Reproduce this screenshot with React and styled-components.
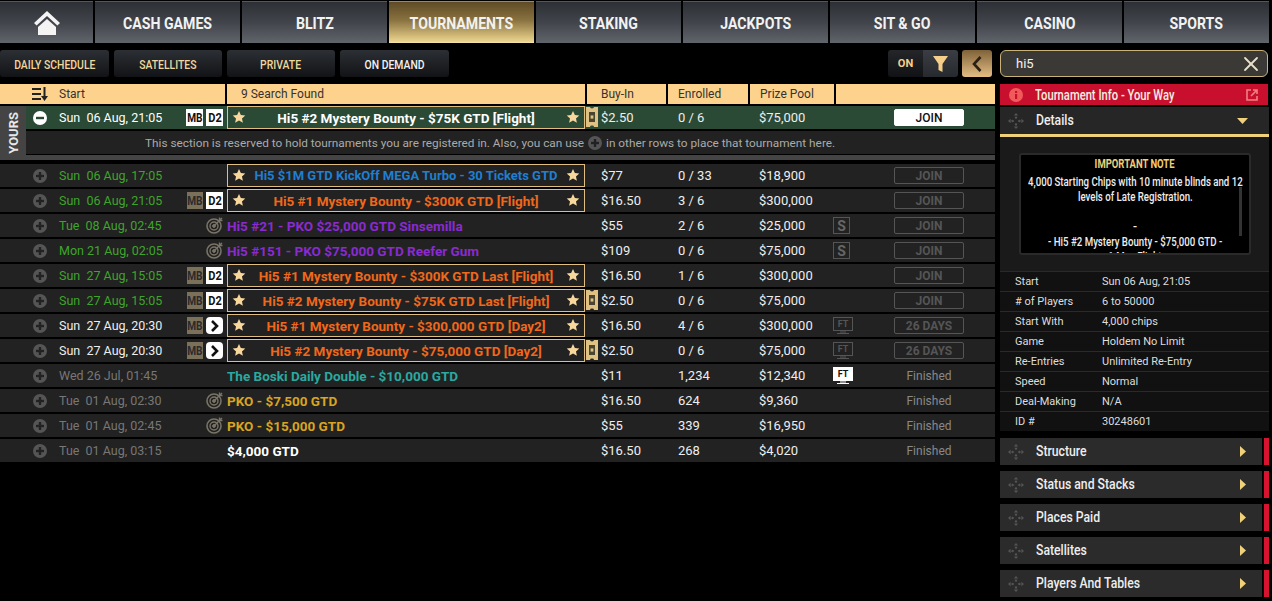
import React from "react";
import styled, { createGlobalStyle } from "styled-components";
import { X } from "lucide-react";

const GlobalStyle = createGlobalStyle`
  html, body { margin: 0; padding: 0; background: #000; }
  body { font-family: Roboto, "Liberation Sans", sans-serif; color: #fff; overflow: hidden; }
`;

const Page = styled.div`
  width: 1272px;
  height: 601px;
  overflow: hidden;
  background: #000;
`;

const Nav = styled.nav`
  display: flex;
  gap: 2px;
  height: 43px;
  padding-top: 1px;
  box-sizing: border-box;
`;

const Tab = styled.div`
  flex: 0 0 ${(p) => (p.$home ? 93 : 145)}px;
  display: flex;
  align-items: center;
  justify-content: center;
  font-size: 17px;
  font-weight: 700;
  color: #f2f2f2;
  background: ${(p) =>
    p.$active
      ? "linear-gradient(#5e4a26 0%, #8a7340 45%, #e9d18c 95%, #f6e6ae 100%)"
      : "linear-gradient(#2c2f34 0%, #41454b 50%, #60646b 100%)"};
  border-top: 1px solid ${(p) => (p.$active ? "#a08a50" : "#54585e")};
  box-sizing: border-box;
`;

const Squeeze = styled.span`
  display: inline-block;
  white-space: nowrap;
  transform: scaleX(${(p) => p.$x || 0.83});
  transform-origin: ${(p) => p.$origin || "center"};
`;

const Main = styled.div`
  display: grid;
  grid-template-columns: 995px 269px;
  column-gap: 5px;
  padding-top: 7px;
`;

const LeftColumn = styled.div`
  display: flex;
  flex-direction: column;
`;

const RightColumn = styled.aside`
  display: flex;
  flex-direction: column;
`;

const Toolbar = styled.div`
  display: flex;
  align-items: stretch;
  height: 27px;
  margin-bottom: 7px;
`;

const FilterButton = styled.div`
  width: ${(p) => p.$w}px;
  margin-right: 5px;
  padding-top: 1px;
  box-sizing: border-box;
  display: flex;
  align-items: center;
  justify-content: center;
  border-radius: 3px;
  background: linear-gradient(#2c2f34, #121316);
  color: ${(p) => p.$color};
  font-size: 13px;
  font-weight: 500;
`;

const Spacer = styled.div`
  flex: 1;
`;

const OnLabel = styled.div`
  width: 35px;
  display: flex;
  align-items: center;
  justify-content: center;
  background: linear-gradient(#24262a, #111215);
  border-radius: 3px 0 0 3px;
  color: #f5cf8a;
  font-size: 11px;
  font-weight: 700;
`;

const FunnelBox = styled.div`
  width: 35px;
  display: flex;
  align-items: center;
  justify-content: center;
  background: linear-gradient(#3a3e44, #26292d);
  border-radius: 0 3px 3px 0;
  margin-right: 4px;
`;

const BackBox = styled.div`
  width: 30px;
  margin-right: 3px;
  display: flex;
  align-items: center;
  justify-content: center;
  border-radius: 3px;
  background: linear-gradient(#7e6238, #e4bd84);
`;

const HeaderRow = styled.div`
  display: grid;
  grid-template-columns: 225px 358px 79px 80px 84px 159px;
  column-gap: 2px;
  height: 20px;
  margin-bottom: 2px;
`;

const HeaderCell = styled.div`
  display: flex;
  align-items: center;
  background: #fdd28c;
  color: #333;
  font-size: 12px;
  padding-left: ${(p) => p.$pad || 0}px;
  gap: 11px;
`;

const YoursBlock = styled.section`
  display: flex;
  height: 54px;
  background: #444;
  margin-bottom: 4px;
`;

const YoursTab = styled.div`
  flex: 0 0 26px;
  min-width: 0;
  display: flex;
  align-items: center;
  justify-content: center;
  color: #e8e8e8;
  font-size: 13px;
  font-weight: 700;
`;

const YoursLabel = styled.span`
  writing-mode: vertical-rl;
  transform: rotate(180deg);
`;

const YoursBody = styled.div`
  flex: 1;
  min-width: 0;
  display: flex;
  flex-direction: column;
  background: #000;
`;

const YoursMessage = styled.div`
  height: 23px;
  margin-top: 2px;
  padding-left: 119px;
  background: #222;
  display: flex;
  align-items: center;
  gap: 4px;
  color: #aaa;
  font-size: 11.8px;
  white-space: nowrap;
`;

const GreyBar = styled.div`
  height: 5px;
  margin-top: 1px;
  background: #444;
`;

const Row = styled.div`
  display: grid;
  grid-template-columns: ${(p) => (p.$yours ? "199px" : "225px")} 358px 79px 80px 84px 159px;
  column-gap: 2px;
  height: 23px;
  margin-bottom: ${(p) => (p.$yours ? 0 : 2)}px;
  background: ${(p) => (p.$yours ? "#2a4a35" : "#222")};
  font-size: 13px;
  color: #eee;
`;

const StartCell = styled.div`
  position: relative;
  display: flex;
  align-items: center;
  padding-left: ${(p) => (p.$yours ? 7 : 33)}px;
`;

const DateText = styled.span`
  margin-left: 12px;
  font-size: 12.5px;
  color: ${(p) => p.$color};
  white-space: pre;
`;

const Badges = styled.div`
  position: absolute;
  right: 2px;
  top: 3px;
  display: flex;
  gap: 3px;
`;

const Badge = styled.div`
  width: ${(p) => (p.$on ? 17 : 16)}px;
  height: 17px;
  display: flex;
  align-items: center;
  justify-content: center;
  font-size: 13px;
  font-weight: 700;
  background: ${(p) => (p.$on ? "#fff" : "#7b7059")};
  color: ${(p) => (p.$on ? "#111" : "#2a2a2a")};
  border-radius: ${(p) => (p.$round ? 4 : 0)}px;
`;

const TargetSlot = styled.div`
  position: absolute;
  right: 1px;
  top: 2px;
`;

const TitleCell = styled.div`
  position: relative;
  display: flex;
  align-items: center;
  justify-content: ${(p) => (p.$boxed ? "center" : "flex-start")};
  box-sizing: border-box;
  border: ${(p) => (p.$boxed ? "1px solid #e0bd80" : "0")};
  background: ${(p) => (p.$yours ? "#2a4a35" : "#222")};
  color: ${(p) => p.$color};
  font-weight: 700;
  font-size: ${(p) => p.$size || 13.5}px;
  white-space: nowrap;
`;

const StarSlot = styled.span`
  position: absolute;
  top: 3px;
  ${(p) => (p.$right ? "right: 4px" : "left: 4px")};
  display: flex;
`;

const BuyInCell = styled.div`
  position: relative;
  display: flex;
  align-items: center;
  padding-left: 14px;
`;

const TicketSlot = styled.span`
  position: absolute;
  left: -1px;
  top: 1px;
  display: flex;
`;

const PlainCell = styled.div`
  display: flex;
  align-items: center;
  padding-left: ${(p) => p.$pad}px;
`;

const ActionCell = styled.div`
  position: relative;
  display: flex;
  align-items: center;
  padding-left: 58px;
`;

const TagSlot = styled.div`
  position: absolute;
  left: -3px;
  top: 3px;
  display: flex;
`;

const STag = styled.div`
  width: 17px;
  height: 17px;
  display: flex;
  align-items: center;
  justify-content: center;
  border: 1px solid #555;
  box-sizing: border-box;
  color: #666;
  font-size: 14px;
  font-weight: 700;
`;

const JoinButton = styled.div`
  width: 70px;
  height: 17px;
  box-sizing: border-box;
  display: flex;
  align-items: center;
  justify-content: center;
  border-radius: 2px;
  border: 1px solid ${(p) => (p.$active ? "#fff" : "#555")};
  background: ${(p) => (p.$active ? "#fff" : "transparent")};
  color: ${(p) => (p.$active ? "#111" : "#555")};
  font-size: 12px;
  font-weight: ${(p) => (p.$active ? 500 : 700)};
`;

const Finished = styled.span`
  width: 70px;
  text-align: center;
  color: #888;
  font-size: 12px;
`;

const SearchBox = styled.div`
  height: 27px;
  box-sizing: border-box;
  margin: 0 1px 7px 0;
  padding: 0 4px 0 15px;
  display: flex;
  align-items: center;
  justify-content: space-between;
  border: 1px solid #c9b27a;
  border-radius: 6px;
  background: #3a3936;
  font-size: 13px;
  color: #f2f2f2;
`;

const RedBar = styled.div`
  height: 21px;
  margin-right: 1px;
  margin-bottom: 2px;
  padding: 0 10px 0 9px;
  display: flex;
  align-items: center;
  gap: 12px;
  background: #c8102e;
  font-size: 14px;
  font-weight: 500;
  color: #f5f0e0;
`;

const RedBarText = styled.div`
  flex: 1;
`;

const DetailsHeader = styled.div`
  height: 27px;
  padding: 0 21px 0 8px;
  display: flex;
  align-items: center;
  gap: 12px;
  background: #262626;
  border-bottom: 3px solid #f0d078;
  font-size: 15px;
  font-weight: 500;
  color: #eee;
`;

const HeaderTitle = styled.div`
  flex: 1;
  padding-bottom: 1px;
`;

const DetailsBody = styled.div`
  height: 134px;
  box-sizing: border-box;
  padding: 16px 18px 0 19px;
  background: #1a1a1a;
`;

const NoteBox = styled.div`
  position: relative;
  height: 102px;
  box-sizing: border-box;
  overflow: hidden;
  padding: 2px 6px 0;
  background: #000;
  border: 2px solid #2a2a2a;
  border-radius: 3px;
  font-size: 12px;
  line-height: 15px;
  color: #eee;
  font-weight: 500;
`;

const NoteTitle = styled.div`
  display: flex;
  justify-content: center;
  color: #f0d078;
  font-weight: 700;
  margin-bottom: 3px;
`;

const NoteLine = styled.div`
  display: flex;
  justify-content: center;
  white-space: nowrap;
`;

const NoteGap = styled.div`
  height: 15px;
`;

const NoteScroll = styled.div`
  position: absolute;
  right: 7px;
  top: 32px;
  width: 3px;
  height: 49px;
  background: #333;
`;

const InfoTable = styled.div`
  display: flex;
  flex-direction: column;
  margin-bottom: 7px;
`;

const InfoRow = styled.div`
  display: grid;
  grid-template-columns: 87px 1fr;
  height: 20px;
  box-sizing: border-box;
  padding: 0 0 1px 15px;
  align-items: center;
  background: #111;
  border-top: 1px solid #2a2a2a;
  font-size: 11px;
  color: #ddd;
`;

const AccordionRow = styled.div`
  display: flex;
  gap: 2px;
  height: 27px;
  margin-bottom: 6px;
`;

const AccordionBody = styled.div`
  flex: 1;
  display: flex;
  align-items: center;
  gap: 12px;
  padding: 0 16px 0 8px;
  background: #2b2b2b;
  font-size: 15px;
  font-weight: 500;
  color: #eee;
`;

const AccordionLabel = styled.div`
  flex: 1;
  padding-bottom: 2px;
`;

const RedStrip = styled.div`
  width: 5px;
  background: #d8132f;
`;

const Plus = ({ minus }) => (
  <svg width="14" height="14" viewBox="0 0 14 14">
    <circle cx="7" cy="7" r="7" fill={minus ? "#fff" : "#555"} />
    <rect x="3" y="5.8" width="8" height="2.4" fill={minus ? "#2a4a35" : "#222"} />
    {!minus && <rect x="5.8" y="3" width="2.4" height="8" fill="#222" />}
  </svg>
);

const Star = () => (
  <svg width="14" height="14" viewBox="0 0 24 24">
    <path d="M12 1.5l3.2 7 7.6.8-5.7 5.1 1.6 7.6-6.7-3.9-6.7 3.9 1.6-7.6L1.2 9.3l7.6-.8z" fill="#f7d79c" />
  </svg>
);

const Ticket = () => (
  <svg width="12" height="20" viewBox="0 0 12 20">
    <path d="M0 0h4a2 1.4 0 0 0 4 0h4v20H8a2 1.4 0 0 0-4 0H0z" fill="#e0c184" />
    <rect x="3" y="5" width="6" height="10" fill="#4a4530" />
    <rect x="4.6" y="8.4" width="2.8" height="3.2" fill="#e0c184" />
  </svg>
);

const Target = () => (
  <svg width="18" height="18" viewBox="0 0 18 18" fill="none" stroke="#7a7466">
    <circle cx="8" cy="10" r="7" strokeWidth="1.6" />
    <circle cx="8" cy="10" r="4" strokeWidth="1.4" />
    <circle cx="8" cy="10" r="1.4" fill="#7a7466" />
    <path d="M8 10l8-8M13.5 1.5v3h3" strokeWidth="1.4" />
  </svg>
);

const Tv = ({ on }) => {
  const color = on ? "#fff" : "#555";
  return (
    <svg width="20" height="17" viewBox="0 0 20 17">
      <rect x="0.5" y="0.5" width="19" height="13" fill={on ? "#fff" : "none"} stroke={color} />
      <text x="10" y="10" textAnchor="middle" fontSize="9" fontWeight="700" fontFamily="Roboto, sans-serif" fill={on ? "#111" : "#555"}>
        FT
      </text>
      <path d="M7 15h6M4 16.5h12" stroke={color} strokeWidth="1" />
    </svg>
  );
};

const MoveIcon = () => (
  <svg width="16" height="16" viewBox="0 0 16 16" fill="#555">
    <path d="M8 0l2.2 2.6H5.8zM8 16l-2.2-2.6h4.4zM0 8l2.6-2.2v4.4zM16 8l-2.6 2.2V5.8z" />
    <circle cx="8" cy="4.6" r="1.2" />
    <circle cx="8" cy="11.4" r="1.2" />
    <circle cx="4.6" cy="8" r="1.2" />
    <circle cx="11.4" cy="8" r="1.2" />
  </svg>
);

const HomeIcon = () => (
  <svg width="28" height="26" viewBox="0 0 28 26">
    <path d="M14 1L1 13l2.6 2.4L14 6l10.4 9.4L27 13z" fill="#f4f4f4" />
    <path d="M14 9L5 17v8h18v-8z" fill="#f4f4f4" />
  </svg>
);

const ChevronMark = () => (
  <svg width="9" height="12" viewBox="0 0 9 12" fill="none">
    <path d="M2 1l5 5-5 5" stroke="#111" strokeWidth="2.6" />
  </svg>
);

const navTabs = ["CASH GAMES", "BLITZ", "TOURNAMENTS", "STAKING", "JACKPOTS", "SIT & GO", "CASINO", "SPORTS"];

const filters = [
  { label: "DAILY SCHEDULE", color: "#f0d79c", w: 109 },
  { label: "SATELLITES", color: "#f0d79c", w: 108 },
  { label: "PRIVATE", color: "#f0d79c", w: 108 },
  { label: "ON DEMAND", color: "#f2f2f2", w: 109 },
];

const GREEN = "#3fa52a";
const WHITE = "#eee";
const GREY = "#777";
const ORANGE = "#f0681a";
const PURPLE = "#8a2bd0";
const GOLD = "#d9a520";

const rows = [
  { date: "Sun  06 Aug, 17:05", dc: GREEN, title: "Hi5 $1M GTD KickOff MEGA Turbo - 30 Tickets GTD", size: 13, color: "#1f7fd0", boxed: true, buy: "$77", en: "0 / 33", prize: "$18,900" },
  { date: "Sun  06 Aug, 21:05", dc: GREEN, badge: "D2", title: "Hi5 #1 Mystery Bounty - $300K GTD [Flight]", color: ORANGE, boxed: true, buy: "$16.50", en: "3 / 6", prize: "$300,000" },
  { date: "Tue  08 Aug, 02:45", dc: GREEN, target: true, title: "Hi5 #21 - PKO $25,000 GTD Sinsemilla", color: PURPLE, buy: "$55", en: "2 / 6", prize: "$25,000", tag: "S" },
  { date: "Mon 21 Aug, 02:05", dc: GREEN, target: true, title: "Hi5 #151 - PKO $75,000 GTD Reefer Gum", color: PURPLE, buy: "$109", en: "0 / 6", prize: "$75,000", tag: "S" },
  { date: "Sun  27 Aug, 15:05", dc: GREEN, badge: "D2", title: "Hi5 #1 Mystery Bounty - $300K GTD Last [Flight]", color: ORANGE, boxed: true, buy: "$16.50", en: "1 / 6", prize: "$300,000" },
  { date: "Sun  27 Aug, 15:05", dc: GREEN, badge: "D2", title: "Hi5 #2 Mystery Bounty - $75K GTD Last [Flight]", color: ORANGE, boxed: true, ticket: true, buy: "$2.50", en: "0 / 6", prize: "$75,000" },
  { date: "Sun  27 Aug, 20:30", dc: WHITE, badge: ">", title: "Hi5 #1 Mystery Bounty - $300,000 GTD [Day2]", color: ORANGE, boxed: true, buy: "$16.50", en: "4 / 6", prize: "$300,000", tag: "FT", join: "26 DAYS" },
  { date: "Sun  27 Aug, 20:30", dc: WHITE, badge: ">", title: "Hi5 #2 Mystery Bounty - $75,000 GTD [Day2]", color: ORANGE, boxed: true, ticket: true, buy: "$2.50", en: "0 / 6", prize: "$75,000", tag: "FT", join: "26 DAYS" },
  { date: "Wed 26 Jul, 01:45", dc: GREY, title: "The Boski Daily Double - $10,000 GTD", color: "#2aa9a0", buy: "$11", en: "1,234", prize: "$12,340", tag: "FTON", finished: true },
  { date: "Tue  01 Aug, 02:30", dc: GREY, target: true, title: "PKO - $7,500 GTD", color: GOLD, buy: "$16.50", en: "624", prize: "$9,360", finished: true },
  { date: "Tue  01 Aug, 02:45", dc: GREY, target: true, title: "PKO - $15,000 GTD", color: GOLD, buy: "$55", en: "339", prize: "$16,950", finished: true },
  { date: "Tue  01 Aug, 03:15", dc: GREY, title: "$4,000 GTD", color: "#fff", buy: "$16.50", en: "268", prize: "$4,020", finished: true },
];

const infoRows = [
  ["Start", "Sun 06 Aug, 21:05"],
  ["# of Players", "6 to 50000"],
  ["Start With", "4,000 chips"],
  ["Game", "Holdem No Limit"],
  ["Re-Entries", "Unlimited Re-Entry"],
  ["Speed", "Normal"],
  ["Deal-Making", "N/A"],
  ["ID #", "30248601"],
];

const sections = ["Structure", "Status and Stacks", "Places Paid", "Satellites", "Players And Tables"];

const TournamentRow = ({ row, yours }) => (
  <Row $yours={yours}>
    <StartCell $yours={yours}>
      <Plus minus={yours} />
      <DateText $color={row.dc}>{row.date}</DateText>
      {row.badge && (
        <Badges>
          <Badge $on={yours}>
            <Squeeze $x={0.78}>MB</Squeeze>
          </Badge>
          <Badge $on $round={row.badge === ">"}>
            {row.badge === ">" ? <ChevronMark /> : <Squeeze $x={0.85}>{row.badge}</Squeeze>}
          </Badge>
        </Badges>
      )}
      {row.target && (
        <TargetSlot>
          <Target />
        </TargetSlot>
      )}
    </StartCell>
    <TitleCell $boxed={row.boxed} $color={row.color} $yours={yours} $size={row.size}>
      {row.boxed && (
        <StarSlot>
          <Star />
        </StarSlot>
      )}
      {row.title}
      {row.boxed && (
        <StarSlot $right>
          <Star />
        </StarSlot>
      )}
    </TitleCell>
    <BuyInCell>
      {row.ticket && (
        <TicketSlot>
          <Ticket />
        </TicketSlot>
      )}
      {row.buy}
    </BuyInCell>
    <PlainCell $pad={10}>{row.en}</PlainCell>
    <PlainCell $pad={9}>{row.prize}</PlainCell>
    <ActionCell>
      {row.tag === "S" && (
        <TagSlot>
          <STag>S</STag>
        </TagSlot>
      )}
      {row.tag === "FT" && (
        <TagSlot>
          <Tv />
        </TagSlot>
      )}
      {row.tag === "FTON" && (
        <TagSlot>
          <Tv on />
        </TagSlot>
      )}
      {row.finished ? <Finished>Finished</Finished> : <JoinButton $active={yours}>{row.join || "JOIN"}</JoinButton>}
    </ActionCell>
  </Row>
);

export default function App() {
  return (
    <Page>
      <GlobalStyle />
      <Nav>
        <Tab $home>
          <HomeIcon />
        </Tab>
        {navTabs.map((t) => (
          <Tab key={t} $active={t === "TOURNAMENTS"}>
            <Squeeze>{t}</Squeeze>
          </Tab>
        ))}
      </Nav>
      <Main>
        <LeftColumn>
          <Toolbar>
            {filters.map((f) => (
              <FilterButton key={f.label} $w={f.w} $color={f.color}>
                <Squeeze $x={0.8}>{f.label}</Squeeze>
              </FilterButton>
            ))}
            <Spacer />
            <OnLabel>ON</OnLabel>
            <FunnelBox>
              <svg width="15" height="16" viewBox="0 0 15 16">
                <path d="M0 0h15L9.5 8v8l-4-2V8z" fill="#f5cf8a" />
              </svg>
            </FunnelBox>
            <BackBox>
              <svg width="10" height="16" viewBox="0 0 10 16" fill="none">
                <path d="M8.5 1L2 8l6.5 7" stroke="#2a2014" strokeWidth="2.6" />
              </svg>
            </BackBox>
          </Toolbar>
          <HeaderRow>
            <HeaderCell $pad={32}>
              <svg width="16" height="14" viewBox="0 0 16 14" fill="#222">
                <path d="M0 1h9v2H0zM0 6h9v2H0zM0 11h9v2H0z" />
                <path d="M11.5 0h2v9H16l-3.5 5L9 9h2.5z" />
              </svg>
              Start
            </HeaderCell>
            <HeaderCell $pad={14}>9 Search Found</HeaderCell>
            <HeaderCell $pad={14}>Buy-In</HeaderCell>
            <HeaderCell $pad={10}>Enrolled</HeaderCell>
            <HeaderCell $pad={10}>Prize Pool</HeaderCell>
            <HeaderCell />
          </HeaderRow>
          <YoursBlock>
            <YoursTab>
              <YoursLabel>YOURS</YoursLabel>
            </YoursTab>
            <YoursBody>
              <TournamentRow
                yours
                row={{
                  date: "Sun  06 Aug, 21:05",
                  dc: "#fff",
                  badge: "D2",
                  title: "Hi5 #2 Mystery Bounty - $75K GTD [Flight]",
                  color: "#fff",
                  boxed: true,
                  ticket: true,
                  buy: "$2.50",
                  en: "0 / 6",
                  prize: "$75,000",
                }}
              />
              <YoursMessage>
                This section is reserved to hold tournaments you are registered in. Also, you can use <Plus /> in other rows to place that tournament here.
              </YoursMessage>
              <GreyBar />
            </YoursBody>
          </YoursBlock>
          {rows.map((r, i) => (
            <TournamentRow key={i} row={r} />
          ))}
        </LeftColumn>
        <RightColumn>
          <SearchBox>
            hi5
            <X size={24} color="#e8e0c8" strokeWidth={1.8} />
          </SearchBox>
          <RedBar>
            <svg width="14" height="14" viewBox="0 0 14 14">
              <circle cx="7" cy="7" r="7" fill="#f05a5a" />
              <rect x="6" y="6" width="2.2" height="5" fill="#c8102e" />
              <rect x="6" y="3" width="2.2" height="2" fill="#c8102e" />
            </svg>
            <RedBarText>
              <Squeeze $x={0.8} $origin="left">
                Tournament Info - Your Way
              </Squeeze>
            </RedBarText>
            <svg width="12" height="12" viewBox="0 0 12 12" fill="none" stroke="#f08080" strokeWidth="1.6">
              <path d="M5 1H1v10h10V7M7 1h4v4M11 1L5 7" />
            </svg>
          </RedBar>
          <DetailsHeader>
            <MoveIcon />
            <HeaderTitle>
              <Squeeze $x={0.815} $origin="left">
                Details
              </Squeeze>
            </HeaderTitle>
            <svg width="11" height="6" viewBox="0 0 11 6">
              <path d="M0 0h11L5.5 6z" fill="#f0d078" />
            </svg>
          </DetailsHeader>
          <DetailsBody>
            <NoteBox>
              <NoteTitle>
                <Squeeze $x={0.79}>IMPORTANT NOTE</Squeeze>
              </NoteTitle>
              <NoteLine>
                <Squeeze $x={0.805}>4,000 Starting Chips with 10 minute blinds and 12</Squeeze>
              </NoteLine>
              <NoteLine>
                <Squeeze $x={0.805}>levels of Late Registration.</Squeeze>
              </NoteLine>
              <NoteGap />
              <NoteLine>-</NoteLine>
              <NoteLine>
                <Squeeze $x={0.805}>- Hi5 #2 Mystery Bounty - $75,000 GTD -</Squeeze>
              </NoteLine>
              <NoteLine>
                <Squeeze $x={0.805}>6-Max Flight</Squeeze>
              </NoteLine>
              <NoteScroll />
            </NoteBox>
          </DetailsBody>
          <InfoTable>
            {infoRows.map(([k, v]) => (
              <InfoRow key={k}>
                <span>{k}</span>
                <span>{v}</span>
              </InfoRow>
            ))}
          </InfoTable>
          {sections.map((s) => (
            <AccordionRow key={s}>
              <AccordionBody>
                <MoveIcon />
                <AccordionLabel>
                  <Squeeze $x={0.815} $origin="left">
                    {s}
                  </Squeeze>
                </AccordionLabel>
                <svg width="6" height="11" viewBox="0 0 6 11">
                  <path d="M0 0l6 5.5L0 11z" fill="#f0d078" />
                </svg>
              </AccordionBody>
              <RedStrip />
            </AccordionRow>
          ))}
        </RightColumn>
      </Main>
    </Page>
  );
}
